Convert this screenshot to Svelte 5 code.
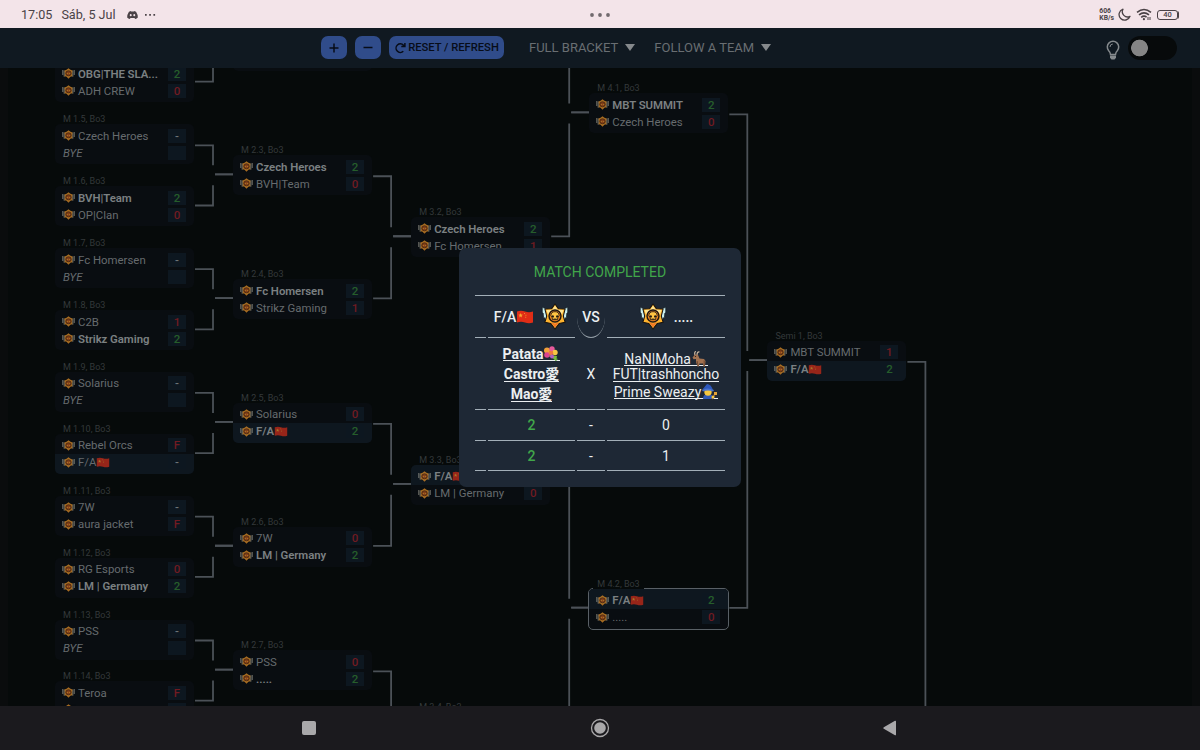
<script lang="ts">
	type Team = { name: string; score: string; win?: boolean; followed?: boolean; flag?: boolean };
	type Match = { round: number; slot: number; label: string; teams: Team[]; open?: boolean };

	const ROUND_WIDTH = 178.1;
	const CANVAS_TOP = 68;

	const team = (name: string, score: string, win = false): Team => ({ name, score, win });
	const fa = (score: string, win = false): Team => ({
		name: 'F/A',
		score,
		win,
		followed: true,
		flag: true
	});
	const bye: Team = { name: 'BYE', score: '' };

	const matches: Match[] = [
		{ round: 1, slot: 4, label: '', teams: [team('OBG|THE SLA...', '2', true), team('ADH CREW', '0')] },
		{ round: 1, slot: 5, label: 'M 1.5, Bo3', teams: [team('Czech Heroes', '-'), bye] },
		{ round: 1, slot: 6, label: 'M 1.6, Bo3', teams: [team('BVH|Team', '2', true), team('OP|Clan', '0')] },
		{ round: 1, slot: 7, label: 'M 1.7, Bo3', teams: [team('Fc Homersen', '-'), bye] },
		{ round: 1, slot: 8, label: 'M 1.8, Bo3', teams: [team('C2B', '1'), team('Strikz Gaming', '2', true)] },
		{ round: 1, slot: 9, label: 'M 1.9, Bo3', teams: [team('Solarius', '-'), bye] },
		{ round: 1, slot: 10, label: 'M 1.10, Bo3', teams: [team('Rebel Orcs', 'F'), fa('-')] },
		{ round: 1, slot: 11, label: 'M 1.11, Bo3', teams: [team('7W', '-'), team('aura jacket', 'F')] },
		{ round: 1, slot: 12, label: 'M 1.12, Bo3', teams: [team('RG Esports', '0'), team('LM | Germany', '2', true)] },
		{ round: 1, slot: 13, label: 'M 1.13, Bo3', teams: [team('PSS', '-'), bye] },
		{ round: 1, slot: 14, label: 'M 1.14, Bo3', teams: [team('Teroa', 'F'), team('', '')] },
		{ round: 2, slot: 2, label: '', teams: [] },
		{ round: 2, slot: 3, label: 'M 2.3, Bo3', teams: [team('Czech Heroes', '2', true), team('BVH|Team', '0')] },
		{ round: 2, slot: 4, label: 'M 2.4, Bo3', teams: [team('Fc Homersen', '2', true), team('Strikz Gaming', '1')] },
		{ round: 2, slot: 5, label: 'M 2.5, Bo3', teams: [team('Solarius', '0'), fa('2', true)] },
		{ round: 2, slot: 6, label: 'M 2.6, Bo3', teams: [team('7W', '0'), team('LM | Germany', '2', true)] },
		{ round: 2, slot: 7, label: 'M 2.7, Bo3', teams: [team('PSS', '0'), team('.....', '2', true)] },
		{ round: 3, slot: 1, label: '', teams: [] },
		{ round: 3, slot: 2, label: 'M 3.2, Bo3', teams: [team('Czech Heroes', '2', true), team('Fc Homersen', '1')] },
		{ round: 3, slot: 3, label: 'M 3.3, Bo3', teams: [fa('2', true), team('LM | Germany', '0')] },
		{ round: 3, slot: 4, label: 'M 3.4, Bo3', teams: [] },
		{ round: 4, slot: 1, label: 'M 4.1, Bo3', teams: [team('MBT SUMMIT', '2', true), team('Czech Heroes', '0')] },
		{ round: 4, slot: 2, label: 'M 4.2, Bo3', teams: [fa('2', true), team('.....', '0')], open: true },
		{ round: 5, slot: 1, label: 'Semi 1, Bo3', teams: [team('MBT SUMMIT', '1'), fa('2', true)] }
	];

	const STEP = 61.9;
	const left = (round: number) => 55 + (round - 1) * ROUND_WIDTH;

	// vertical centre of the first team row
	function rowY(round: number, slot: number) {
		const span = 2 ** (round - 1);
		return 135.6 - CANVAS_TOP + ((slot - 0.5) * span - 4.5) * STEP;
	}

	function connector(round: number, slot: number) {
		const x = left(round);
		const upper = slot % 2 === 1;
		const exit = rowY(round, slot) + (upper ? 9.7 : 8);
		const join = rowY(round + 1, Math.ceil(slot / 2)) + 7.8;
		const end = join + (upper ? -9 : 11);
		return `M${x + 140} ${exit}H${x + 158}V${end}M${x + 160} ${join}H${x + ROUND_WIDTH}`;
	}

	const lines = matches.map((m) => connector(m.round, m.slot));

	function tone(t: Team) {
		if (t.score === '-' || t.score === '') return 'none';
		return t.score === '2' ? 'won' : 'lost';
	}

	const results = [
		['2', '0'],
		['2', '1']
	];
</script>

{#snippet flag()}
	<svg class="flag" viewBox="0 0 18 14" aria-hidden="true">
		<path d="M1 1.5q4-1.4 8 0t8 0v11q-4 1.4-8 0t-8 0z" fill="#e12d16" />
		<path d="M4.6 3l.6 1.6 1.7.1-1.3 1 .4 1.7-1.4-1-1.4 1 .5-1.7-1.4-1 1.7-.1z" fill="#f9a92e" />
		<path d="M8 3h1v1H8zM9.4 4.7h1v1h-1zM9.2 6.8h1v1h-1z" fill="#f08a2a" />
	</svg>
{/snippet}

{#snippet crest()}
	<svg class="crest" viewBox="0 0 13 11" aria-hidden="true">
		<path d="M.8 2v5M2.200 2.500v6.200M12.200 2v5M10.800 2.500v6.200" stroke="#a1a294" stroke-width=".9" />
		<path d="M6.500.3l2 1.500 2 .6-.4 3.300.3 2.500-2 .5-1.900 2-1.900-2-2-.5.3-2.500-.4-3.300 2-.6z" fill="#cf8426" />
		<ellipse cx="6.500" cy="5.300" rx="2.700" ry="2.500" fill="#a34c1a" stroke="#40220f" stroke-width=".7" />
		<path d="M4.900 4.900h1.200v.9H4.900zM6.900 4.900h1.200v.9H6.900z" fill="#e09a32" />
	</svg>
{/snippet}

{#snippet badge()}
	<svg class="badge" viewBox="0 0 28 28" aria-hidden="true">
		<path d="M.8 4.500l5.500 2v13l-2.300-1-.6-3-1.300-.8-.3-4-1-1zM27.200 4.500l-5.500 2v13l2.300-1 .6-3 1.300-.8.3-4 1-1z" fill="#c9f0f2" stroke="#101820" stroke-width=".7" />
		<path
			d="M14 1l3.500 5 7 .2-1.900 7.300 1.900 6.500-6.200 1.200L14 27l-4.300-5.800L3.500 20l1.900-6.500L3.500 6.200l7-.2z"
			fill="#ffb52f"
			stroke="#17110d"
			stroke-width="1.100"
			stroke-linejoin="round"
		/>
		<path d="M14 2.700l2.800 4.300 6 .3-1.400 4.200L14 6.500l-7.400 5-1.400-4.200 6-.3z" fill="#ffe592" />
		<path d="M4.900 19l7.100 1.500 2 1 2-1 7.100-1.500-5.300 1.300L14 25.300l-3.800-5z" fill="#f37827" />
		<circle cx="14" cy="13.500" r="6.200" fill="#f08a25" stroke="#211713" stroke-width="1.500" />
		<path d="M9.700 13.200a4.300 4.200 0 018.600 0l-1.300 1.900-.4 2.200h-5.200l-.4-2.200z" fill="#ffc443" stroke="#211713" stroke-width=".9" />
		<path d="M10.700 12.600l2.300.7-.3 1.800-2-.3zM17.300 12.600l-2.300.7.3 1.800 2-.3zM12.700 15.900h.8v1.400h-.8zM14.500 15.900h.8v1.400h-.8z" fill="#211713" />
	</svg>
{/snippet}

<div class="screen">
	<header class="status">
		<div class="status-left">
			<span class="clock">17:05</span>
			<span class="date">Sáb, 5 Jul</span>
			<svg class="discord" viewBox="0 0 24 18" aria-hidden="true">
				<path
					fill="#4a4246"
					fill-rule="evenodd"
					d="M8.500 0L9 1.200h6L15.500 0 20 1.500q4 6 4 13-2.500 2.500-6 3.500l-1.500-2.500h-9L6 18q-3.500-1-6-3.500 0-7 4-13zM8 7a2.200 2.400 0 100 4.800A2.200 2.400 0 008 7zm8 0a2.200 2.400 0 100 4.800A2.200 2.400 0 0016 7z"
				/>
			</svg>
			<svg class="more" viewBox="0 0 12 4" aria-hidden="true">
				<path d="M1 1h1.700v1.700H1zM5.200 1h1.700v1.700H5.200zM9.400 1h1.700v1.700H9.400z" fill="#4a4246" />
			</svg>
		</div>
		<svg class="handle" viewBox="0 0 20 4" aria-hidden="true">
			<g fill="#716a6e"><circle cx="2" cy="2" r="1.900" /><circle cx="10" cy="2" r="1.900" /><circle cx="18" cy="2" r="1.900" /></g>
		</svg>
		<div class="status-right">
			<span class="speed">606<br />KB/s</span>
			<svg width="13" height="13" viewBox="0 0 13 13" aria-hidden="true">
				<path d="M5 1.200A5.600 5.600 0 1012 8.300 5.200 5.200 0 015 1.200z" fill="none" stroke="#4a4246" stroke-width="1.300" stroke-linejoin="round" />
			</svg>
			<svg width="16" height="13" viewBox="0 0 16 13" aria-hidden="true">
				<path d="M1 4.300q7-5.500 14 0M3 6.900q5-4 10 0M5.200 9.300q2.800-2.200 5.400-.2" fill="none" stroke="#4a4246" stroke-width="1.600" />
				<circle cx="7.900" cy="11.200" r="1.100" fill="#4a4246" />
				<path d="M12 9v3M14 9v3" stroke="#4a4246" />
			</svg>
			<span class="battery">40</span>
		</div>
	</header>

	<nav class="toolbar">
		<div class="actions">
			<button class="btn square" aria-label="Zoom in">
				<svg width="12" height="12" viewBox="0 0 12 12"><path d="M6 1.500v9M1.500 6h9" /></svg>
			</button>
			<button class="btn square" aria-label="Zoom out">
				<svg width="12" height="12" viewBox="0 0 12 12"><path d="M1.500 5.500h9" /></svg>
			</button>
			<button class="btn reset">
				<svg width="12" height="12" viewBox="0 0 12 12">
					<path d="M9.300 9.300A4.300 4.300 0 119.500 3.200L10.500 4.300M10.900 1v3.600H7.300" />
				</svg>
				RESET / REFRESH
			</button>
		</div>
		<div class="menus">
			<span class="menu">FULL BRACKET <i></i></span>
			<span class="menu">FOLLOW A TEAM <i></i></span>
		</div>
		<div class="theme">
			<svg width="14" height="21" viewBox="0 0 14 21" aria-hidden="true">
				<path d="M4.500 14.500Q4.500 12.500 2.700 10.700A5.700 5.700 0 1111.300 10.700Q9.500 12.500 9.500 14.500z" fill="none" stroke="#858a8d" stroke-width="1.500" />
				<path d="M4 7Q4 4.200 6.800 4" fill="none" stroke="#858a8d" />
				<path d="M4 15.500h6v2.300L8.500 19.600h-3L4 17.800z" fill="#858a8d" />
			</svg>
			<span class="toggle"></span>
		</div>
	</nav>

	<main class="bracket">
		<svg class="lines" viewBox="0 0 1200 638" aria-hidden="true">
			{#each lines as d}
				<path {d} />
			{/each}
		</svg>

		{#each matches as m}
			<section
				class="match"
				class:open={m.open}
				style:left="{left(m.round)}px"
				style:top="{rowY(m.round, m.slot) - 21.3}px"
			>
				<div class="label"><span>{m.label}</span></div>
				<div class="card">
					{#each m.teams as t}
						<div class="team" class:win={t.win} class:followed={t.followed} class:bye={t.name === 'BYE'}>
							{#if t.name !== 'BYE'}{@render crest()}{/if}
							<span class="name">{t.name}{#if t.flag}{@render flag()}{/if}</span>
							<span class="score {tone(t)}">{t.score}</span>
						</div>
					{/each}
				</div>
			</section>
		{/each}

		<div class="dialog" role="dialog" aria-label="Match completed">
			<h2>MATCH COMPLETED</h2>
			<div class="grid head">
				<div></div>
				<div class="side home"><b>F/A</b>{@render flag()}{@render badge()}</div>
				<div class="versus"><span>VS</span></div>
				<div class="side away">{@render badge()}<b>.....</b></div>
			</div>
			<div class="grid players">
				<div></div>
				<div class="roster strong">
					<span class="player"
						>Patata<svg class="emoji" viewBox="0 0 16 16" aria-hidden="true">
							<path d="M7 9l8 4-2 2-5-4z" fill="#4c9d3b" />
							<path d="M3 9l11 1-1 5-3-3z" fill="#77b83e" />
							<circle cx="4" cy="4.500" r="3" fill="#f1a03a" /><circle cx="9" cy="3" r="2.700" fill="#e75a9c" />
							<circle cx="12" cy="6.500" r="2.700" fill="#f8c544" /><circle cx="4" cy="9" r="2.800" fill="#dd428f" />
							<circle cx="8" cy="7" r="2.300" fill="#ef7440" /><circle cx="9" cy="10.500" r="2" fill="#b25fc2" />
						</svg></span
					>
					<span class="player">Castro愛</span>
					<span class="player">Mao愛</span>
				</div>
				<div>X</div>
				<div class="roster">
					<span class="player"
						>NaN|Moha<svg class="emoji" viewBox="0 0 16 16" aria-hidden="true">
							<path d="M4 4Q3 1 5 .5M6 4Q6 .5 8.500 1" fill="none" stroke="#cbb79f" stroke-width="1.200" />
							<path d="M1.500 6.500L4 3.500l3 .5 1.500 3.500L13 8l1.500 2-.5 5.500h-1.500L12 12.500H8.500l-.5 3H6.500L5 11V8l-2.500.3z" fill="#a27250" />
							<path d="M6 10l1.200 5M13.200 9.500v5.500" stroke="#70482f" /><circle cx="4.500" cy="5.500" r=".6" fill="#251a15" />
						</svg></span
					>
					<span class="player">FUT|trashhoncho</span>
					<span class="player"
						>Prime Sweazy<svg class="emoji" viewBox="0 0 16 16" aria-hidden="true">
							<path d="M2 15q0-5 5-5t6 5z" fill="#3159b4" />
							<circle cx="7" cy="8" r="3.700" fill="#f7c83f" />
							<path d="M1 6L6 0q4 0 6 6-5-2-11 0z" fill="#2d58bd" /><path d="M1 6q5-3 12 0l-1 1.500q-5-2-10 0z" fill="#4974d0" />
							<path d="M11 15l3-5" stroke="#8d5739" stroke-width="1.500" /><path d="M13 8h3v3h-3z" fill="#e3a338" />
							<circle cx="12" cy="13" r="1.500" fill="#f7c83f" />
						</svg></span
					>
				</div>
			</div>
			{#each results as [home, away]}
				<div class="grid result">
					<div></div>
					<div class="green">{home}</div>
					<div>-</div>
					<div>{away}</div>
				</div>
			{/each}
		</div>
	</main>

	<footer class="system">
		<svg width="14" height="14" viewBox="0 0 14 14" aria-hidden="true"><rect width="14" height="14" rx="2" /></svg>
		<svg width="20" height="20" viewBox="0 0 20 20" aria-hidden="true">
			<circle cx="10" cy="10" r="8.500" class="ring" /><circle cx="10" cy="10" r="5.800" />
		</svg>
		<svg width="14" height="16" viewBox="0 0 14 16" aria-hidden="true"><path d="M.8 7.200L12 .8q1-.3 1 .8v12.800q0 1.100-1 .8L.8 8.800q-1-.8 0-1.600z" /></svg>
	</footer>
</div>

<style>
	:global(body) {
		background: #060a0a;
	}

	.screen {
		display: flex;
		flex-direction: column;
		width: 1200px;
		height: 750px;
		overflow: hidden;
		font-family: Roboto, 'Noto Sans CJK JP', sans-serif;
	}

	.status {
		display: grid;
		grid-template-columns: 1fr 20px 1fr;
		align-items: center;
		box-sizing: border-box;
		height: 28px;
		padding: 1px 21px 0;
		background: #f3e4e9;
		color: #4a4246;
	}

	.status-left,
	.status-right {
		display: flex;
		align-items: center;
		font-size: 12.6px;
		line-height: 16px;
	}

	.date {
		margin-left: 9px;
	}

	.discord {
		width: 11px;
		height: 8px;
		margin-left: 11px;
	}

	.more {
		width: 12px;
		height: 4px;
		margin-left: 6px;
	}

	.handle {
		width: 20px;
		height: 4px;
	}

	.status-right {
		justify-content: flex-end;
		gap: 5px;
	}

	.speed {
		margin-right: -1px;
		font-size: 6.8px;
		font-weight: 700;
		line-height: 7px;
	}

	.battery {
		box-sizing: border-box;
		width: 21px;
		height: 10px;
		margin-right: 1px;
		border: 1px solid #4a4246;
		border-radius: 3px;
		box-shadow: 2px 0 0 -1px #4a4246;
		font-size: 7.5px;
		font-weight: 500;
		line-height: 8px;
		text-align: center;
	}

	.toolbar {
		display: flex;
		align-items: center;
		box-sizing: border-box;
		height: 40px;
		padding: 0 23px 1px 321px;
		background: #101921;
	}

	.actions {
		display: flex;
		gap: 8px;
		width: 208px;
	}

	.btn {
		display: flex;
		align-items: center;
		justify-content: center;
		height: 23px;
		padding: 0;
		border: 0;
		border-radius: 7px;
		background: #304c8a;
		color: #070c18;
		font: 500 11.2px Roboto, sans-serif;
		white-space: nowrap;
	}

	.btn svg {
		fill: none;
		stroke: #070c18;
		stroke-width: 1.5;
	}

	.square {
		width: 26px;
	}

	.reset {
		gap: 2px;
		width: 115px;
	}

	.menus {
		display: flex;
		gap: 19px;
		color: #696e72;
		font-size: 13px;
		line-height: 16px;
	}

	.menu {
		display: flex;
		align-items: center;
		gap: 7px;
		white-space: nowrap;
	}

	.menu i {
		border: 5.5px solid transparent;
		border-top: 7px solid #85898c;
		border-bottom: 0;
	}

	.theme {
		display: flex;
		align-items: center;
		gap: 8px;
		margin-left: auto;
	}

	.theme svg {
		margin-top: 6px;
	}

	.toggle {
		width: 49px;
		height: 24px;
		margin-top: 1px;
		border-radius: 12px;
		background: radial-gradient(circle at 11.5px 12px, #858585 8px, #070a0b 8.7px);
	}

	.bracket {
		position: relative;
		flex: 1;
		box-sizing: border-box;
		overflow: hidden;
		border: solid #0a0c0d;
		border-width: 0 8px;
		background: #060a0a;
	}

	.lines,
	.match {
		position: absolute;
		margin-left: -8px;
	}

	.lines {
		top: 0;
		left: 0;
		width: 1200px;
		height: 638px;
		fill: none;
		stroke: #4b5157;
		stroke-width: 1.8;
	}

	.match {
		width: 139px;
	}

	.label {
		height: 10px;
		padding-left: 8px;
		color: #34393a;
		font-size: 9px;
		line-height: 10px;
		white-space: nowrap;
	}

	.card {
		height: 40px;
		overflow: hidden;
		border-radius: 5px;
		background: #090d11;
	}

	.team {
		display: flex;
		align-items: center;
		box-sizing: border-box;
		height: 20px;
		padding: 0 8px 3px 7px;
		color: #666b6e;
		font-size: 11.4px;
	}

	.team:first-child {
		padding: 3px 8px 0 7px;
	}

	.team.win {
		color: #7b8082;
		font-weight: 600;
		letter-spacing: -0.05px;
	}

	.crest {
		width: 13px;
		height: 11px;
		margin-right: 3px;
		opacity: 0.8;
	}

	.team.followed {
		background: #0e171f;
	}

	.name {
		flex: 1;
		white-space: nowrap;
	}

	.team .flag {
		width: 14px;
		height: 11px;
		vertical-align: -2px;
		opacity: 0.65;
	}

	.bye .name {
		padding-left: 1px;
		font-style: italic;
	}

	.score {
		width: 18px;
		height: 14px;
		background: #0d1720;
		color: #6d7477;
		font-size: 11.5px;
		font-weight: 500;
		line-height: 14px;
		text-align: center;
	}

	.score.won {
		color: #265d2b;
	}

	.score.lost {
		color: #711b22;
	}

	.open .card {
		position: relative;
		margin: -1px -1px 0 -1px;
		border: 1px solid #596066;
	}

	.open .label {
		position: relative;
		z-index: 1;
	}

	.open .label span {
		display: inline-block;
		padding: 0 4px;
		margin-left: -4px;
		background: #060a0a;
	}

	.dialog {
		position: absolute;
		z-index: 2;
		top: 180px;
		left: 451px;
		box-sizing: border-box;
		width: 282px;
		height: 239px;
		padding: 15px 16px;
		border-radius: 7px;
		background: #1e2835;
		color: #eceff1;
		font-size: 14px;
		text-align: center;
	}

	h2 {
		height: 32px;
		margin: 0;
		border-bottom: 1px solid #a3afb8;
		color: #41a64a;
		font-size: 14px;
		font-weight: 400;
		line-height: 18px;
	}

	.grid {
		display: grid;
		grid-template-columns: 11px 87px 28px 118px;
		gap: 2px;
	}

	.grid > div {
		display: flex;
		align-items: center;
		justify-content: center;
		box-sizing: border-box;
		border-bottom: 1px solid #a3afb8;
	}

	.head > div {
		height: 42px;
	}

	.head b {
		font-weight: 500;
	}

	.head .versus {
		border-bottom: 0;
		font-weight: 500;
	}

	.versus span {
		flex: none;
		width: 28px;
		height: 40px;
		border-bottom: 1px solid #96a0a8;
		border-radius: 50%;
		line-height: 41px;
	}

	.dialog .flag {
		width: 18px;
		height: 14px;
	}

	.dialog .badge {
		width: 28px;
		height: 27px;
	}

	.home .badge {
		margin: 0 0 0 7px;
	}

	.away .badge {
		margin-right: 7px;
	}

	.players > div {
		height: 72px;
	}

	.players > .roster {
		flex-direction: column;
		gap: 1.5px;
		padding-top: 2px;
	}

	.players > .strong {
		gap: 5.5px;
		padding-top: 1px;
		font-weight: 700;
	}

	.player {
		flex: none;
		height: 14px;
		border-bottom: 1px solid #eceff1;
		line-height: 15px;
		white-space: nowrap;
	}

	.emoji {
		width: 16px;
		height: 16px;
		margin-right: 1px;
		vertical-align: -3px;
	}

	.result > div {
		height: 31px;
	}

	.result:last-child > div {
		height: 30px;
	}

	.result .green {
		color: #41a64a;
		font-weight: 500;
	}

	.system {
		display: flex;
		align-items: center;
		justify-content: space-between;
		box-sizing: border-box;
		height: 44px;
		padding: 0 303px 0 302px;
		background: #1b1a1e;
		fill: #a9a8aa;
	}

	.ring {
		fill: none;
		stroke: #a9a8aa;
		stroke-width: 1.3;
	}
</style>
